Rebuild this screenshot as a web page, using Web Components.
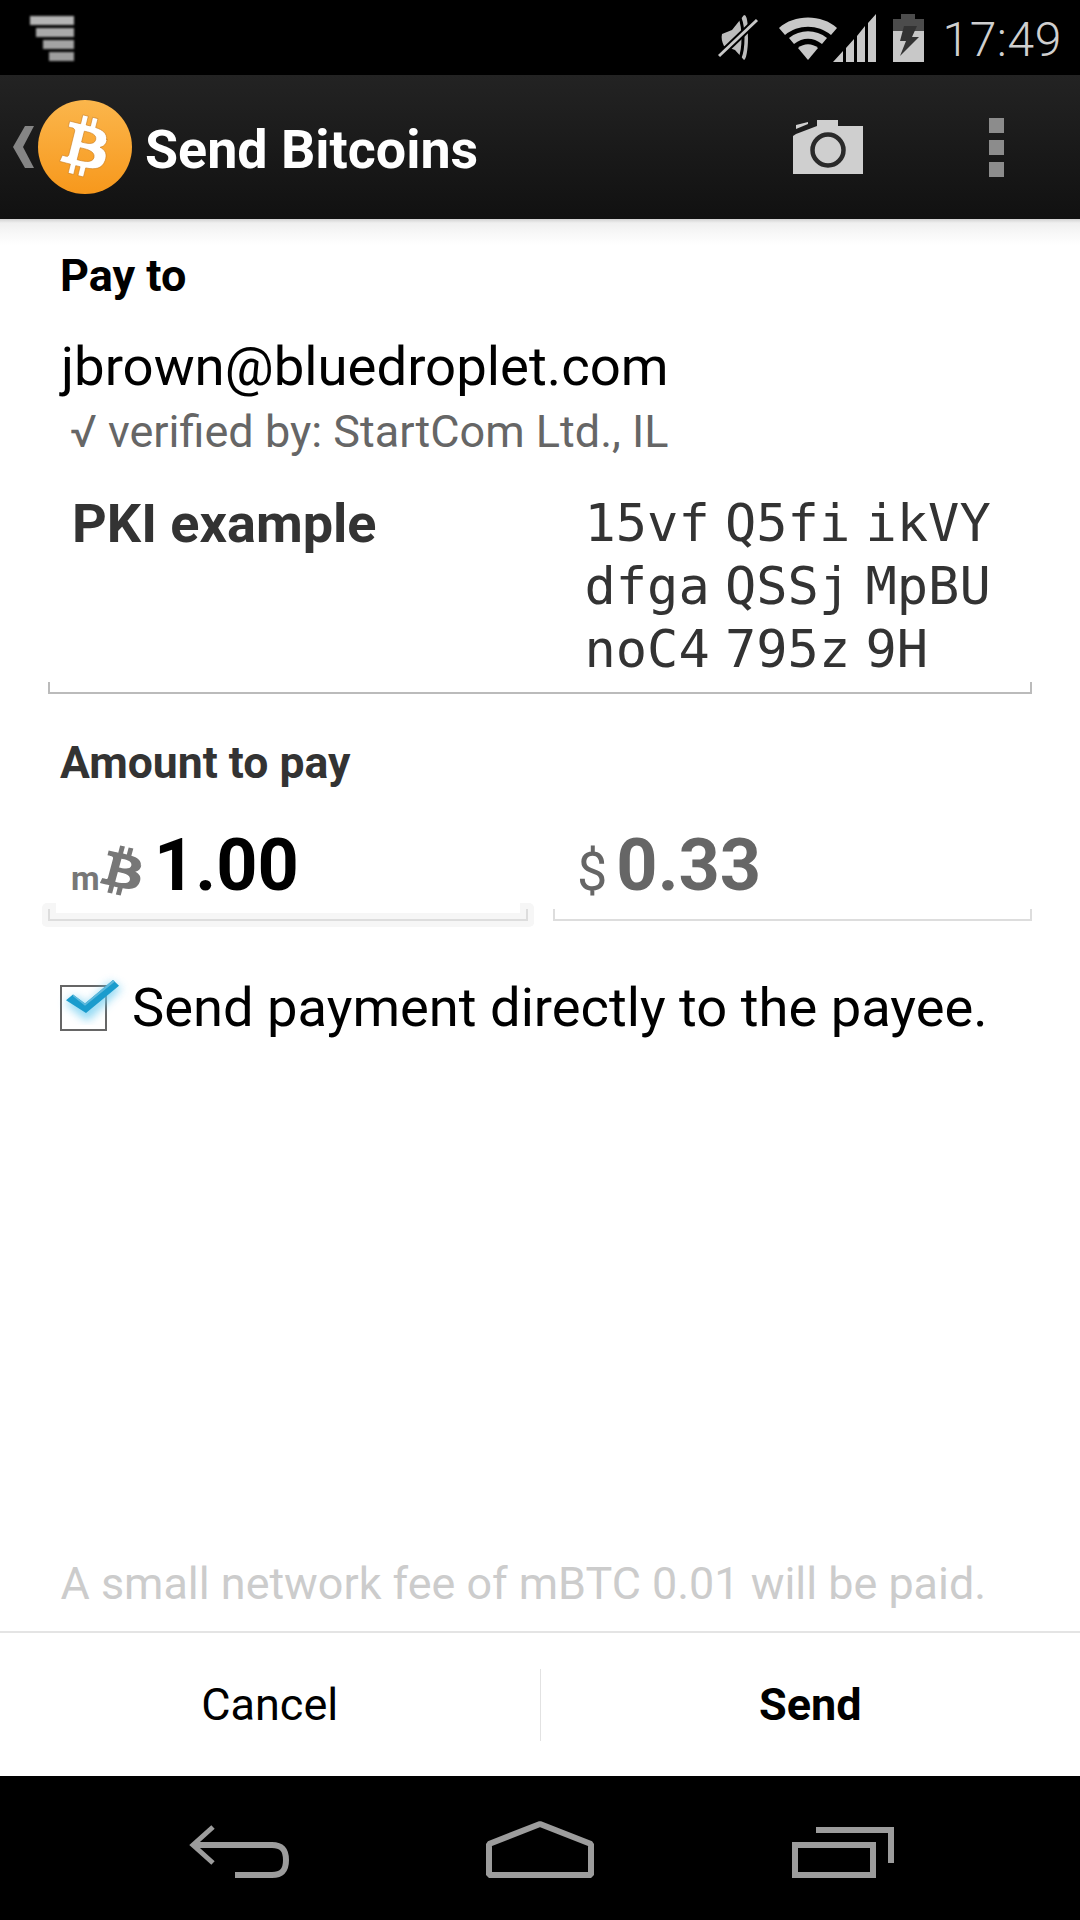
<!DOCTYPE html>
<html>
<head>
<meta charset="utf-8">
<title>Send Bitcoins</title>
<style>
    html, body { margin: 0; padding: 0; background: #fff; }
    body { font-family: Roboto, "Liberation Sans", sans-serif; }
</style>
</head>
<body>
<send-screen>
    <status-bar slot="status"></status-bar>
    <action-bar slot="action" title-text="Send Bitcoins"></action-bar>

    <form-label style="--top: 31px; --left: 60px; --size: 45px; --colour: #000">Pay to</form-label>
    <payee-info name="jbrown@bluedroplet.com" verified="√ verified by: StartCom Ltd., IL"></payee-info>
    <address-field label="PKI example">
        <span>15vf</span><span>Q5fi</span><span>ikVY</span>
        <span>dfga</span><span>QSSj</span><span>MpBU</span>
        <span>noC4</span><span>795z</span><span>9H</span>
    </address-field>
    <form-label style="--top: 42.5px; --left: 60px; --size: 44.5px; --colour: #333">Amount to pay</form-label>
    <amount-row></amount-row>
    <check-row>Send payment directly to the payee.</check-row>

    <fee-note slot="bottom">A small network fee of mBTC 0.01 will be paid.</fee-note>
    <button-bar slot="bottom"></button-bar>
    <nav-bar slot="bottom"></nav-bar>
</send-screen>

<script>
const BTC_PATH = "M46.1 27.4c.6-4.3-2.6-6.6-7.1-8.1l1.5-5.8-3.5-.9-1.4 5.7c-.9-.2-1.9-.4-2.8-.7l1.4-5.7-3.6-.9-1.4 5.8c-.8-.2-1.5-.3-2.3-.5l-4.9-1.2-.9 3.8s2.6.6 2.6.6c1.4.4 1.7 1.3 1.6 2.1l-3.9 15.7c-.2.4-.6 1.1-1.6.8 0 0-2.6-.7-2.6-.7l-1.8 4 4.6 1.2c.9.2 1.7.4 2.5.6l-1.5 5.9 3.6.9 1.4-5.8c1 .3 1.9.5 2.8.7l-1.4 5.8 3.6.9 1.5-5.9c6.1 1.2 10.7.7 12.7-4.8 1.6-4.4-.1-7-3.3-8.7 2.4-.5 4.1-2 4.6-5.2zm-8.2 11.5c-1.1 4.4-8.6 2-11 1.4l2-7.8c2.4.6 10.2 1.8 9 6.4zm1.1-11.6c-1 4-7.2 2-9.2 1.5l1.8-7.1c2 .5 8.5 1.4 7.4 5.6z"

// small helper so every element is written the same way
function define(name, html, setup) {
    const template = document.createElement("template")
    template.innerHTML = html
    customElements.define(name, class extends HTMLElement {
        constructor() {
            super()
            this.attachShadow({mode: "open"}).append(template.content.cloneNode(true))
        }
        connectedCallback() {
            if (setup) setup(this, this.shadowRoot)
        }
    })
}

define("send-screen", `
<style>
    :host { display: flex; flex-direction: column; width: 1080px; height: 1920px; overflow: hidden; background: #fff; }
    .content { flex: 1; min-height: 0; position: relative; }
    .content::before {
        content: ""; position: absolute; left: 0; right: 0; top: 0; height: 26px;
        background: linear-gradient(#d2d2d2 0, #efefef 4px, #f6f6f6 12px, #fff 26px);
    }
    .inner { position: relative; display: flex; flex-direction: column; }
</style>
<slot name="status"></slot>
<slot name="action"></slot>
<div class="content"><div class="inner"><slot></slot></div></div>
<slot name="bottom"></slot>
`)

define("status-bar", `
<style>
    :host { display: flex; align-items: center; height: 75px; background: #000; position: relative; font-family: Roboto, sans-serif; }
    .notif { margin-left: 30px; width: 44px; height: 46px; filter: blur(1px); }
    .right { margin-left: auto; display: flex; align-items: center; }
    .mute { width: 42px; height: 48px; margin-right: 18px; }
    .wifi { width: 60px; height: 46px; margin-right: -5px; }
    .signal { width: 44px; height: 48px; margin-right: 15px; }
    .batt { width: 33px; height: 48px; margin-right: 17px; }
    .time { font-size: 48px; font-weight: 300; color: #cfcfcf; margin-right: 18px; line-height: 75px; letter-spacing: .6px; padding-top: 4px; }
</style>
<svg class="notif" viewBox="0 0 44 46">
    <rect x="0" y="1" width="44" height="9" fill="#b4b4b4"/>
    <rect x="6" y="13" width="38" height="9" fill="#aaa"/>
    <rect x="13" y="25" width="31" height="9" fill="#a4a4a4"/>
    <rect x="19" y="37" width="25" height="9" fill="#9e9e9e"/>
</svg>
<div class="right">
    <svg class="mute" viewBox="0 0 42 48">
        <path d="M4 20 L14 16 L26 1 C30 1 30 14 30 24 C30 36 28 46 26 46 L17 36 L6 32 C4 28 3 24 4 20 Z" fill="#bdbdbd"/>
        <path d="M22 4 C26 14 26 34 22 44" fill="none" stroke="#000" stroke-width="3"/>
        <path d="M1 42 L39 6" stroke="#000" stroke-width="7"/>
        <path d="M1 42 L39 6" stroke="#c8c8c8" stroke-width="3"/>
    </svg>
    <svg class="wifi" viewBox="0 0 60 46">
        <path d="M1 13 C16 -1 44 -1 59 13 L53 20 C40 9 20 9 7 20 Z" fill="#c8c8c8"/>
        <path d="M11 23 C22 14 38 14 49 23 L44 29 C35 22 25 22 16 29 Z" fill="#c8c8c8"/>
        <path d="M20 33 C26 28 34 28 40 33 L30 45 Z" fill="#c8c8c8"/>
    </svg>
    <svg class="signal" viewBox="0 0 44 48">
        <path d="M0 48 L10 37 L10 48 Z M13 34 L21 25 L21 48 L13 48 Z M24 22 L32 12 L32 48 L24 48 Z M35 9 L43 0 L43 48 L35 48 Z" fill="#c8c8c8"/>
    </svg>
    <svg class="batt" viewBox="0 0 33 48">
        <path d="M9 0 H23 V5 H32 V48 H1 V5 H9 Z" fill="#c8c8c8"/>
        <path d="M9 0 H23 V5 H32 V17 H1 V5 H9 Z" fill="#4c4c4c"/>
        <path d="M12 12 H25 L20 23 H27 L8 42 L14 27 H8 Z" fill="#333"/>
    </svg>
    <div class="time">17:49</div>
</div>
`)

define("action-bar", `
<style>
    :host { display: flex; align-items: center; height: 144px; background: linear-gradient(#232323, #111); font-family: Roboto, sans-serif; }
    .up { width: 21px; height: 42px; margin-left: 13px; }
    .logo { width: 94px; height: 94px; margin-left: 4px; }
    .title { color: #fff; font-size: 53.8px; font-weight: 700; margin-left: 13px; padding-top: 4px; }
    .cam { width: 72px; height: 56px; margin-left: auto; margin-right: 125px; }
    .dots { display: flex; flex-direction: column; gap: 7px; margin-right: 76px; }
    .dots i { display: block; width: 15px; height: 15px; background: #8c8c8c; }
</style>
<svg class="up" viewBox="0 0 21 42"><path d="M21 0 L12 0 L0 21 L12 42 L21 42 L10 21 Z" fill="#858585"/></svg>
<svg class="logo" viewBox="0 0 94 94">
    <defs>
        <linearGradient id="coin" x1="0" y1="0" x2="0" y2="1">
            <stop offset="0" stop-color="#fbb64c"/>
            <stop offset="1" stop-color="#f7981c"/>
        </linearGradient>
    </defs>
    <circle cx="47" cy="47" r="47" fill="url(#coin)"/>
    <path d="${BTC_PATH}" fill="#fff" stroke="#c87a1a" stroke-width=".4" transform="translate(-2 -2) scale(1.53)"/>
</svg>
<div class="title"></div>
<svg class="cam" viewBox="0 0 72 56">
    <path d="M1 17 L1 55 L71 55 L71 7 L46 7 L46 1 L25 1 L25 7 L4 15 Z" fill="#cfcfcf"/>
    <circle cx="36" cy="31" r="15.5" fill="none" stroke="#2a2a2a" stroke-width="4.5"/>
    <path d="M4 6 L16 3 L16 5 L4 10 Z" fill="#cfcfcf"/>
</svg>
<div class="dots"><i></i><i></i><i></i></div>
`, (el, root) => {
    root.querySelector(".title").textContent = el.getAttribute("title-text")
})

define("form-label", `
<style>
    :host {
        display: block; margin-top: var(--top); padding-left: var(--left);
        font: 700 var(--size)/52px Roboto, sans-serif; color: var(--colour);
    }
</style>
<slot></slot>
`)

define("payee-info", `
<style>
    :host { display: block; padding-left: 61px; font-family: Roboto, sans-serif; }
    .name { font-size: 54.5px; line-height: 64px; color: #000; margin-top: 32px; }
    .verified { font-size: 45px; line-height: 50px; color: #666; margin-left: 9px; margin-top: 9px; }
</style>
<div class="name"></div>
<div class="verified"></div>
`, (el, root) => {
    root.querySelector(".name").textContent = el.getAttribute("name")
    root.querySelector(".verified").textContent = el.getAttribute("verified")
})

define("field-line", `
<style>
    :host { display: block; height: 12px; border: 2px solid var(--line, #bbb); border-top: 0; box-sizing: border-box; }
</style>
`)

define("address-field", `
<style>
    :host { display: block; margin: 35px 48px 0 48px; }
    .row { display: flex; justify-content: space-between; padding-left: 24px; }
    .label { font: 700 54px/63px Roboto, sans-serif; color: #333; }
    .addr {
        display: grid; grid-template-columns: repeat(3, 125px); column-gap: 15.5px; width: 410px; margin-right: 37.5px;
        font: 52px/63px "DejaVu Sans Mono", "Liberation Mono", monospace; color: #333;
    }
    ::slotted(span) { white-space: nowrap; }
    field-line { margin-top: 1px; }
</style>
<div class="row">
    <div class="label"></div>
    <div class="addr"><slot></slot></div>
</div>
<field-line></field-line>
`, (el, root) => {
    root.querySelector(".label").textContent = el.getAttribute("label")
})

define("amount-row", `
<style>
    :host { display: flex; margin: 35px 48px 0 48px; gap: 25px; align-items: flex-start; font-family: Roboto, sans-serif; }
    .cell { flex: 1; min-width: 0; }
    .value { height: 84px; display: flex; align-items: baseline; }
    .left .value { padding-left: 23px; }
    .right .value { padding-left: 24.5px; }
    .under { position: relative; margin-top: 1px; }
    .left .under::before {
        content: ""; position: absolute; left: -6px; right: -6px; top: -6px; bottom: -6px;
        border: 14px solid #f6f6f6; border-top: 0; border-radius: 5px; box-sizing: border-box;
    }
    field-line { position: relative; --line: #ddd; }
    .m { font-size: 33px; font-weight: 700; color: #777; width: 27px; }
    .btc { width: 48px; height: 58px; align-self: flex-start; margin-right: 8px; transform: translateY(19px); }
    .big { font-size: 72px; font-weight: 700; line-height: 84px; color: #000; }
    .usd { font-size: 54px; font-weight: 400; color: #666; margin-right: 9px; }
    .fiat { color: #666; }
</style>
<div class="cell left">
    <div class="value">
        <span class="m">m</span>
        <svg class="btc" viewBox="14 9 36 47" preserveAspectRatio="none"><path d="${BTC_PATH}" fill="#777"/></svg>
        <span class="big">1.00</span>
    </div>
    <div class="under"><field-line></field-line></div>
</div>
<div class="cell right">
    <div class="value">
        <span class="usd">$</span>
        <span class="big fiat">0.33</span>
    </div>
    <div class="under"><field-line></field-line></div>
</div>
`)

define("check-row", `
<style>
    :host { display: flex; align-items: center; margin: 55px 0 0 60px; font-family: Roboto, sans-serif; }
    .box { position: relative; width: 47px; height: 46px; border: 2px solid #666; box-sizing: border-box; flex: none; }
    .box svg { position: absolute; left: 4px; top: -7px; overflow: visible; }
    .text { font-size: 54.3px; line-height: 64px; color: #000; margin-left: 25px; }
</style>
<div class="box">
    <svg width="56" height="42" viewBox="0 0 56 52" preserveAspectRatio="none">
        <defs><filter id="glow" x="-40%" y="-40%" width="180%" height="180%"><feGaussianBlur stdDeviation="5"/></filter></defs>
        <path d="M4 24 L21 41 L50 6" fill="none" stroke="#6fcdf0" stroke-width="14" filter="url(#glow)" opacity=".75"/>
        <path d="M0 25 L7 18 L19 29 L47 0 L53 7 L20 41 Z" fill="#1a9ccd"/>
        <path d="M7 18 L19 29 L47 0 L49 2 L19 32 L7 20 Z" fill="#5fb9dc"/>
    </svg>
</div>
<div class="text"><slot></slot></div>
`)

define("fee-note", `
<style>
    :host { display: block; padding: 0 0 21px 60.5px; font: 44.9px/52px Roboto, sans-serif; color: #ccc; }
</style>
<slot></slot>
`)

define("button-bar", `
<style>
    :host { display: flex; align-items: center; height: 145px; border-top: 2px solid #e4e4e4; box-sizing: border-box; font: 45px Roboto, sans-serif; color: #000; }
    div { flex: 1; text-align: center; }
    .send { font-weight: 700; }
    .sep { flex: none; width: 1px; height: 72px; background: #e2e2e2; }
</style>
<div>Cancel</div>
<span class="sep"></span>
<div class="send">Send</div>
`)

define("nav-bar", `
<style>
    :host { display: flex; height: 144px; background: #000; position: relative; }
    svg { position: absolute; fill: none; stroke: #9c9c9c; stroke-width: 6; }
    .back { left: 188px; top: 48px; }
    .home { left: 485px; top: 44px; }
    .recent { left: 790px; top: 50px; }
</style>
<svg class="back" width="104" height="56" viewBox="0 0 104 56">
    <path d="M25 3 L5 21 L25 39" stroke-width="5"/>
    <path d="M6 21 H84 C94 21 98 26 98 36 C98 46 94 51 84 51 H47"/>
</svg>
<svg class="home" width="110" height="60" viewBox="0 0 110 60">
    <path d="M4 55 V24 L55 4 L106 24 V55 Z" stroke-linejoin="bevel"/>
</svg>
<svg class="recent" width="106" height="54" viewBox="0 0 106 54">
    <rect x="5" y="19" width="78" height="30"/>
    <path d="M26 4 H101 V37"/>
</svg>
`)
</script>
</body>
</html>
